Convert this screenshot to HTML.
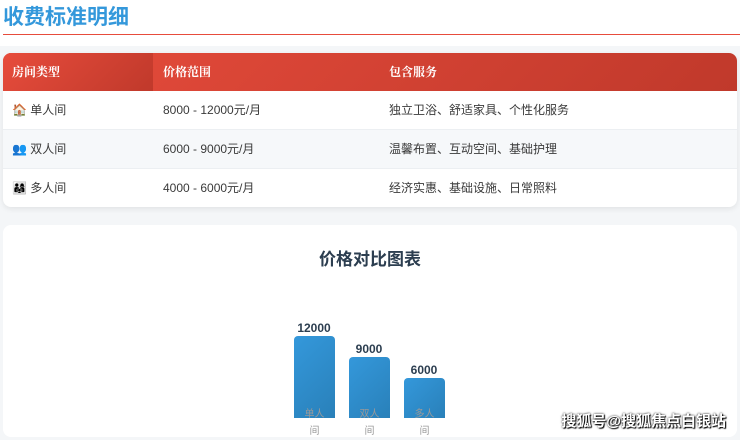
<!DOCTYPE html>
<html><head><meta charset="utf-8"><style>
*{margin:0;padding:0;box-sizing:border-box}
body{width:740px;height:437px;overflow:hidden;background:#f4f6f8;font-family:"Liberation Sans","Noto Sans CJK SC",sans-serif;position:relative}
.top{position:absolute;left:0;top:0;width:740px;height:46px;background:#fff}
h1{position:absolute;left:3px;top:1px;font-size:21px;color:#3498db;font-weight:bold;letter-spacing:0}
.line{position:absolute;left:3px;top:34px;width:737px;height:1px;background:#e74c3c}
.tbl{position:absolute;left:3px;top:53px;width:734px;height:154px;background:#fff;border-radius:8px;overflow:hidden;box-shadow:0 2px 6px rgba(0,0,0,.08)}
.hd{height:38px;background:linear-gradient(135deg,#e74c3c,#c0392b);position:relative;color:#fff;font-weight:bold;font-size:12px;font-family:"Liberation Serif","Noto Serif CJK SC",serif}
.hd span,.r span{position:absolute;top:0;line-height:38px}
.hd .c1{left:0;width:150px;padding-left:9px;background:linear-gradient(135deg,#e74c3c,#c0392b)}
.r{height:39px;position:relative;font-size:12px;color:#3a3a3a;border-bottom:1px solid #eceff2}
.r.alt{background:#f6f8fa}
.c1{left:9px}.c2{left:160px}.c3{left:386px}
.chart{position:absolute;left:3px;top:225px;width:734px;height:212px;background:#fff;border-radius:8px}
.ct{position:absolute;left:0;width:734px;top:20px;text-align:center;font-size:17px;font-weight:bold;color:#2c3e50}
.bar{position:absolute;width:41px;background:linear-gradient(135deg,#3498db,#2980b9);border-radius:4px 4px 0 0;bottom:19px}
.v{position:absolute;width:60px;text-align:center;font-size:12px;font-weight:bold;color:#2c3e50}
.lb{position:absolute;width:41px;text-align:center;font-size:10px;color:#999;line-height:17px}
.wm{position:absolute;right:14px;top:410px;font-size:15px;color:#fff;font-weight:bold;text-shadow:0 0 2px #000,1px 1px 1px #000}
</style></head><body>
<div class="top"><h1>收费标准明细</h1><div class="line"></div></div>
<div class="tbl">
<div class="hd"><span class="c1">房间类型</span><span class="c2">价格范围</span><span class="c3">包含服务</span></div>
<div class="r"><span class="c1">🏠 单人间</span><span class="c2">8000 - 12000元/月</span><span class="c3">独立卫浴、舒适家具、个性化服务</span></div>
<div class="r alt"><span class="c1">👥 双人间</span><span class="c2">6000 - 9000元/月</span><span class="c3">温馨布置、互动空间、基础护理</span></div>
<div class="r" style="border:none"><span class="c1">👨‍👩‍👧 多人间</span><span class="c2">4000 - 6000元/月</span><span class="c3">经济实惠、基础设施、日常照料</span></div>
</div>
<div class="chart">
<div class="ct">价格对比图表</div>
<div class="bar" style="left:291px;height:82px"></div>
<div class="bar" style="left:346px;height:61px"></div>
<div class="bar" style="left:401px;height:40px"></div>
<div class="v" style="left:281px;top:96px">12000</div>
<div class="v" style="left:336px;top:117px">9000</div>
<div class="v" style="left:391px;top:138px">6000</div>
<div class="lb" style="left:291px;top:181px">单人<br>间</div>
<div class="lb" style="left:346px;top:181px">双人<br>间</div>
<div class="lb" style="left:401px;top:181px">多人<br>间</div>
</div>
<div class="wm">搜狐号@搜狐焦点白银站</div>
</body></html>
